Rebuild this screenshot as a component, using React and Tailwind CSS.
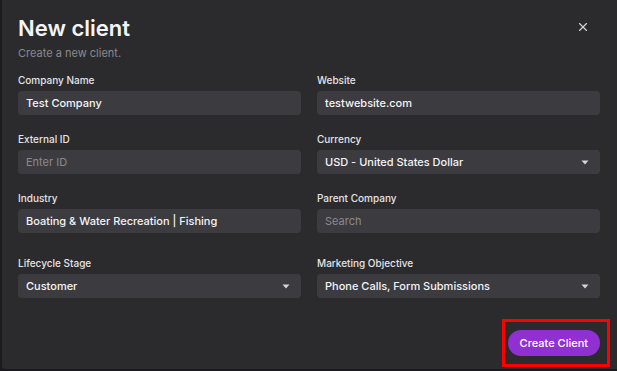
import React from "react";
import { X } from "lucide-react";

const Caret = () => (
  <svg width="8" height="5" viewBox="0 0 8 5" className="shrink-0">
    <path d="M0.5 0.5 H7.5 L4 4.5 Z" fill="#d4d4d8" />
  </svg>
);

const Field = ({ label, value, placeholder, select, className = "" }) => (
  <div className={`flex flex-col ${className}`}>
    <label className="text-[10px] font-medium text-[#e4e4e7] leading-[12px] mb-[5px]">{label}</label>
    <div className="h-[24px] rounded-[4px] bg-[#3c3b40] flex items-center justify-between pl-[8px] pr-[11px]">
      {value ? (
        <span className="text-[11px] font-medium text-[#f4f4f5]">{value}</span>
      ) : (
        <span className="text-[11px] text-[#8b8a90]">{placeholder}</span>
      )}
      {select && <Caret />}
    </div>
  </div>
);

export default function App() {
  return (
    <div
      className="w-[617px] h-[371px] bg-[#1b1a1e] overflow-hidden"
      style={{ fontFamily: "Inter, 'Noto Sans', sans-serif" }}
    >
      <div className="relative ml-[2px] h-[369px] bg-[#2b2b2e] rounded-bl-[3px] pl-[16px] pr-[17px] pt-[14px]">
        <div className="flex items-start justify-between">
          <div>
            <h1 className="text-[22px] font-semibold text-[#f4f4f5] leading-[28px]">New client</h1>
            <p className="text-[11px] text-[#8a898f] mt-[4px] leading-[14px]">Create a new client.</p>
          </div>
          <button className="mt-[6px] mr-[10px] text-[#d4d4d8]">
            <X size={14} strokeWidth={2} />
          </button>
        </div>

        <div className="grid grid-cols-2 gap-x-[16px] mt-[14px]">
          <Field label="Company Name" value="Test Company" />
          <Field label="Website" value="testwebsite.com" />
          <Field label="External ID" placeholder="Enter ID" className="mt-[18px]" />
          <Field label="Currency" value="USD - United States Dollar" select className="mt-[18px]" />
          <Field label="Industry" value="Boating & Water Recreation | Fishing" className="mt-[18px]" />
          <Field label="Parent Company" placeholder="Search" className="mt-[18px]" />
          <Field label="Lifecycle Stage" value="Customer" select className="mt-[24px]" />
          <Field label="Marketing Objective" value="Phone Calls, Form Submissions" select className="mt-[24px]" />
        </div>

        <div className="flex justify-end mt-[32px]">
          <button className="h-[26px] px-[12px] rounded-full bg-[#9030d2] text-[11px] font-medium text-white">
            Create Client
          </button>
        </div>

        <div className="absolute left-[500px] top-[319px] w-[108px] h-[48px] border-[3px] border-[#ff0000] pointer-events-none" />
      </div>
    </div>
  );
}
